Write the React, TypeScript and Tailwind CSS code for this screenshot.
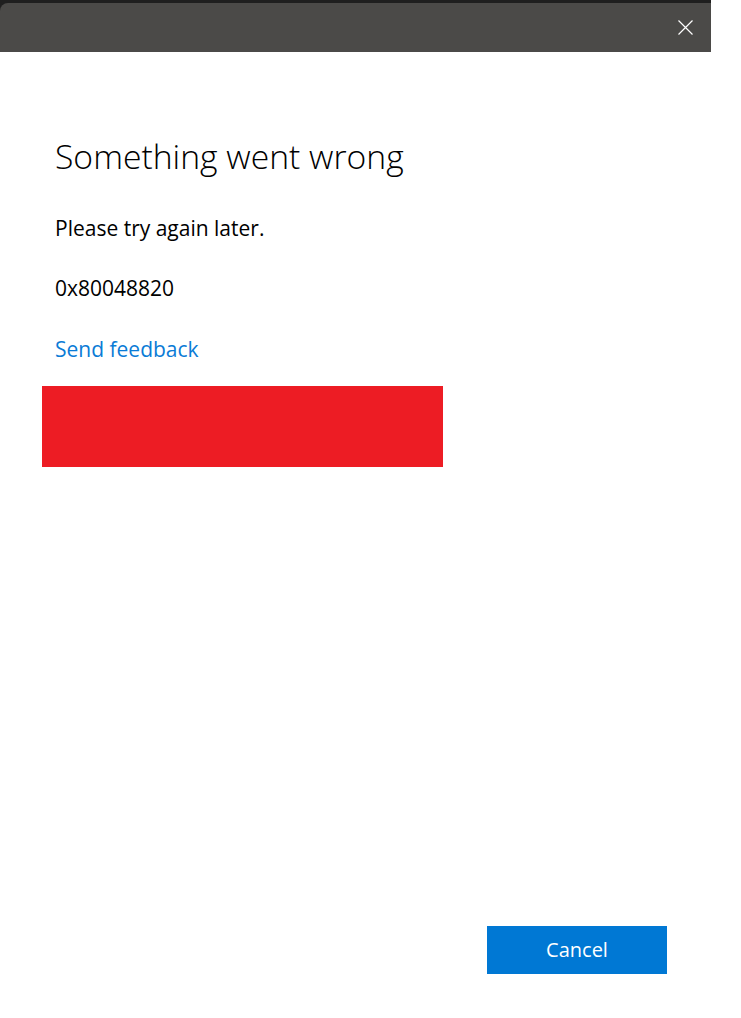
import React from "react";

export default function App() {
  return (
    <div className="w-[741px] h-[1018px] bg-white" style={{ fontFamily: '"Open Sans", "Noto Sans", sans-serif' }}>
      <div className="w-[711px] h-[1018px] flex flex-col">
        <div className="bg-[#1f1f1f] pt-[3px]">
          <div className="h-[49px] bg-[#4b4a48] rounded-tl-[8px] flex items-center justify-end pr-[18px]">
            <svg width="15" height="15" viewBox="0 0 15 15" className="block">
              <path d="M0.5 0.5 L14.5 14.5 M14.5 0.5 L0.5 14.5" stroke="#ffffff" strokeWidth="1.2" fill="none" />
            </svg>
          </div>
        </div>
        <div className="pl-[55px] flex flex-col">
          <div className="mt-[80px] h-[48px] leading-[48px] text-[33.7px] font-light text-black whitespace-nowrap">
            Something went wrong
          </div>
          <div className="mt-[34px] h-[28px] leading-[28px] text-[21px] text-black whitespace-nowrap">
            Please try again later.
          </div>
          <div className="mt-[32px] h-[28px] leading-[28px] text-[21px] text-black whitespace-nowrap">
            0x80048820
          </div>
          <div className="mt-[33px] h-[28px] leading-[28px] text-[21px] text-[#0a7bd6] whitespace-nowrap">
            Send feedback
          </div>
          <div className="mt-[23px] ml-[-13px] w-[401px] h-[81px] bg-[#ed1c24]" />
        </div>
        <div className="mt-[459px] flex justify-end pr-[44px]">
          <button className="w-[180px] h-[48px] bg-[#0078d4] text-white text-[20px] leading-[48px] text-center">
            Cancel
          </button>
        </div>
      </div>
    </div>
  );
}
